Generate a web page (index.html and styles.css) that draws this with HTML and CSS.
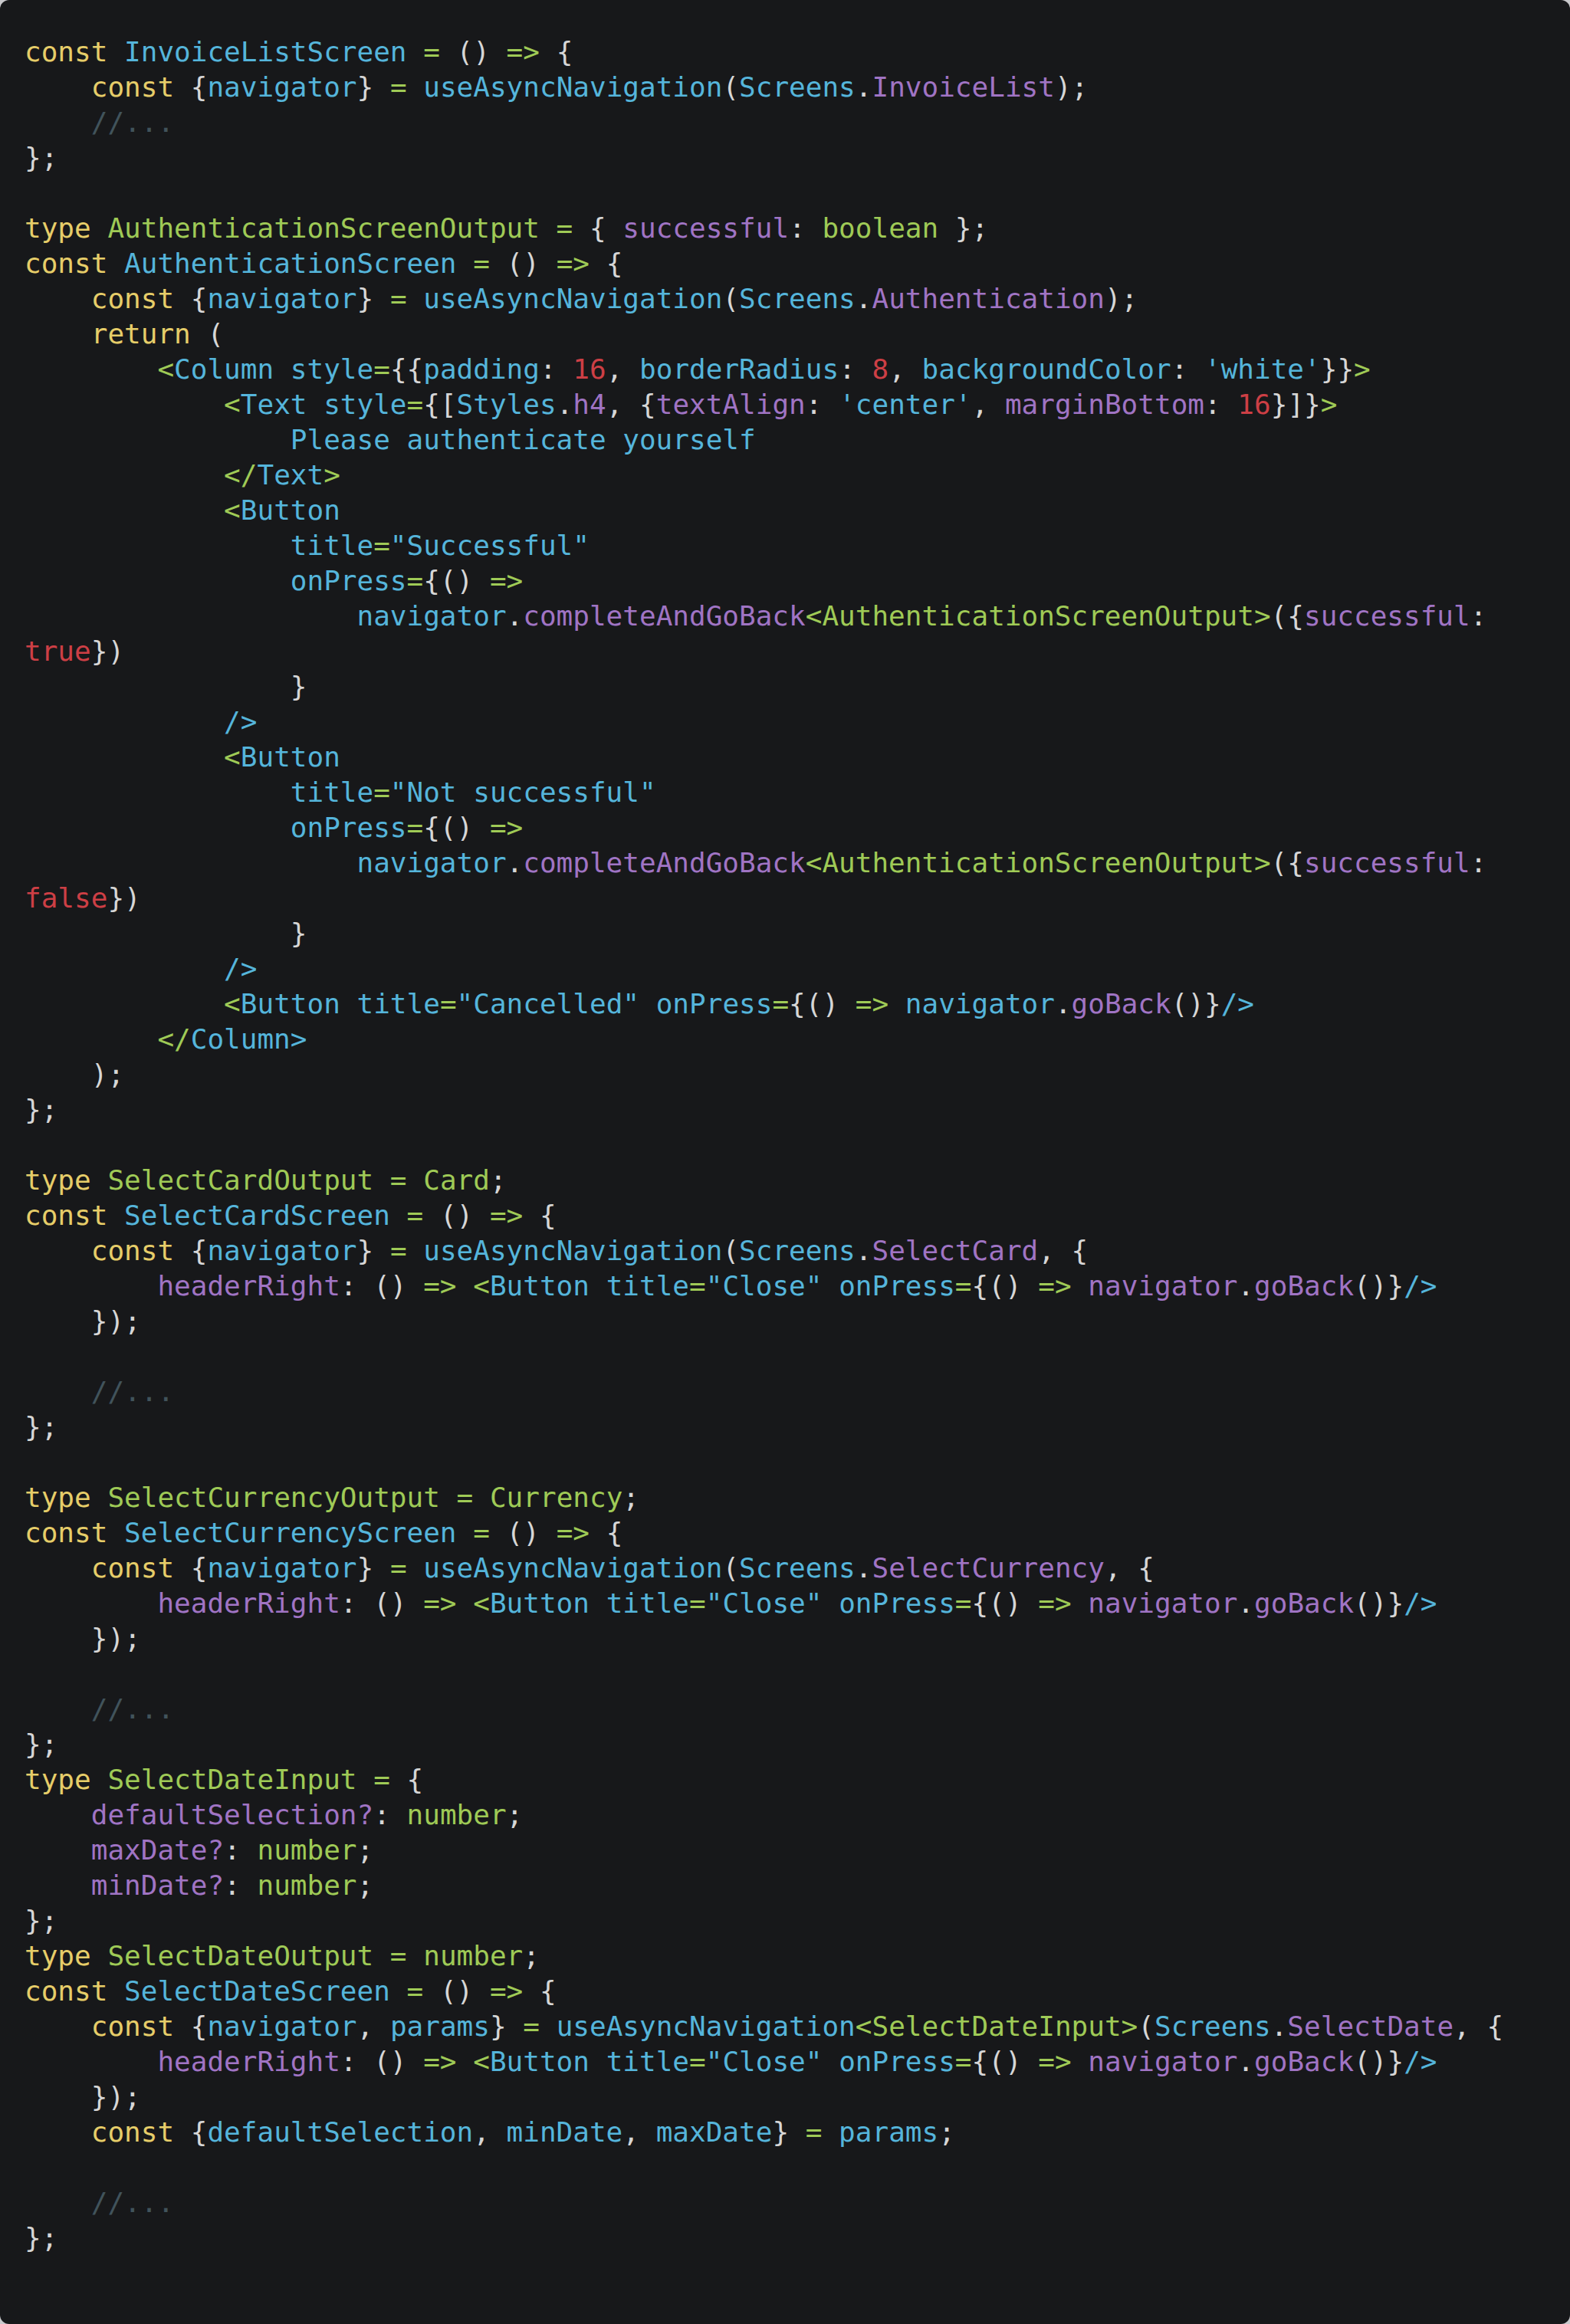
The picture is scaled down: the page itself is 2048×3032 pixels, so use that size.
FILE: index.html
```html
<!DOCTYPE html>
<html lang="en">
<head>
    <meta charset="UTF-8">
    <meta name="viewport" content="width=device-width, initial-scale=1.0">
    <title>Async Navigation - Screens</title>
    <link rel="stylesheet" href="styles.css">
</head>
<body>
    <div class="code-block">
<pre class="code"><span class="k">const</span> <span class="f">InvoiceListScreen</span> <span class="t">=</span> () <span class="t">=&gt;</span> {
    <span class="k">const</span> {<span class="f">navigator</span>} <span class="t">=</span> <span class="f">useAsyncNavigation</span>(<span class="f">Screens</span>.<span class="p">InvoiceList</span>);
    <span class="c">//...</span>
};

<span class="k">type</span> <span class="t">AuthenticationScreenOutput</span> <span class="t">=</span> { <span class="p">successful</span>: <span class="t">boolean</span> };
<span class="k">const</span> <span class="f">AuthenticationScreen</span> <span class="t">=</span> () <span class="t">=&gt;</span> {
    <span class="k">const</span> {<span class="f">navigator</span>} <span class="t">=</span> <span class="f">useAsyncNavigation</span>(<span class="f">Screens</span>.<span class="p">Authentication</span>);
    <span class="k">return</span> (
        <span class="t">&lt;</span><span class="f">Column</span> <span class="f">style</span><span class="t">=</span>{{<span class="f">padding</span>: <span class="n">16</span>, <span class="f">borderRadius</span>: <span class="n">8</span>, <span class="f">backgroundColor</span>: <span class="f">'white'</span>}}<span class="t">&gt;</span>
            <span class="t">&lt;</span><span class="f">Text</span> <span class="f">style</span><span class="t">=</span>{[<span class="f">Styles</span>.<span class="p">h4</span>, {<span class="p">textAlign</span>: <span class="f">'center'</span>, <span class="p">marginBottom</span>: <span class="n">16</span>}]}<span class="t">&gt;</span>
                <span class="f">Please authenticate yourself</span>
            <span class="t">&lt;/</span><span class="f">Text</span><span class="t">&gt;</span>
            <span class="t">&lt;</span><span class="f">Button</span>
                <span class="f">title</span><span class="t">=</span><span class="f">"Successful"</span>
                <span class="f">onPress</span><span class="t">=</span>{() <span class="t">=&gt;</span>
                    <span class="f">navigator</span>.<span class="p">completeAndGoBack</span><span class="t">&lt;AuthenticationScreenOutput&gt;</span>({<span class="p">successful</span>: <span class="n">true</span>})
                }
            <span class="f">/&gt;</span>
            <span class="t">&lt;</span><span class="f">Button</span>
                <span class="f">title</span><span class="t">=</span><span class="f">"Not successful"</span>
                <span class="f">onPress</span><span class="t">=</span>{() <span class="t">=&gt;</span>
                    <span class="f">navigator</span>.<span class="p">completeAndGoBack</span><span class="t">&lt;AuthenticationScreenOutput&gt;</span>({<span class="p">successful</span>: <span class="n">false</span>})
                }
            <span class="f">/&gt;</span>
            <span class="t">&lt;</span><span class="f">Button</span> <span class="f">title</span><span class="t">=</span><span class="f">"Cancelled"</span> <span class="f">onPress</span><span class="t">=</span>{() <span class="t">=&gt;</span> <span class="f">navigator</span>.<span class="p">goBack</span>()}<span class="f">/&gt;</span>
        <span class="t">&lt;/</span><span class="f">Column&gt;</span>
    );
};

<span class="k">type</span> <span class="t">SelectCardOutput</span> <span class="t">=</span> <span class="t">Card</span>;
<span class="k">const</span> <span class="f">SelectCardScreen</span> <span class="t">=</span> () <span class="t">=&gt;</span> {
    <span class="k">const</span> {<span class="f">navigator</span>} <span class="t">=</span> <span class="f">useAsyncNavigation</span>(<span class="f">Screens</span>.<span class="p">SelectCard</span>, {
        <span class="p">headerRight</span>: () <span class="t">=&gt;</span> <span class="t">&lt;</span><span class="f">Button</span> <span class="f">title</span><span class="t">=</span><span class="f">"Close"</span> <span class="f">onPress</span><span class="t">=</span>{() <span class="t">=&gt;</span> <span class="p">navigator</span>.<span class="p">goBack</span>()}<span class="f">/&gt;</span>
    });

    <span class="c">//...</span>
};

<span class="k">type</span> <span class="t">SelectCurrencyOutput</span> <span class="t">=</span> <span class="t">Currency</span>;
<span class="k">const</span> <span class="f">SelectCurrencyScreen</span> <span class="t">=</span> () <span class="t">=&gt;</span> {
    <span class="k">const</span> {<span class="f">navigator</span>} <span class="t">=</span> <span class="f">useAsyncNavigation</span>(<span class="f">Screens</span>.<span class="p">SelectCurrency</span>, {
        <span class="p">headerRight</span>: () <span class="t">=&gt;</span> <span class="t">&lt;</span><span class="f">Button</span> <span class="f">title</span><span class="t">=</span><span class="f">"Close"</span> <span class="f">onPress</span><span class="t">=</span>{() <span class="t">=&gt;</span> <span class="p">navigator</span>.<span class="p">goBack</span>()}<span class="f">/&gt;</span>
    });

    <span class="c">//...</span>
};
<span class="k">type</span> <span class="t">SelectDateInput</span> <span class="t">=</span> {
    <span class="p">defaultSelection?</span>: <span class="t">number</span>;
    <span class="p">maxDate?</span>: <span class="t">number</span>;
    <span class="p">minDate?</span>: <span class="t">number</span>;
};
<span class="k">type</span> <span class="t">SelectDateOutput</span> <span class="t">=</span> <span class="t">number</span>;
<span class="k">const</span> <span class="f">SelectDateScreen</span> <span class="t">=</span> () <span class="t">=&gt;</span> {
    <span class="k">const</span> {<span class="f">navigator</span>, <span class="f">params</span>} <span class="t">=</span> <span class="f">useAsyncNavigation</span><span class="t">&lt;SelectDateInput&gt;</span>(<span class="f">Screens</span>.<span class="p">SelectDate</span>, {
        <span class="p">headerRight</span>: () <span class="t">=&gt;</span> <span class="t">&lt;</span><span class="f">Button</span> <span class="f">title</span><span class="t">=</span><span class="f">"Close"</span> <span class="f">onPress</span><span class="t">=</span>{() <span class="t">=&gt;</span> <span class="p">navigator</span>.<span class="p">goBack</span>()}<span class="f">/&gt;</span>
    });
    <span class="k">const</span> {<span class="f">defaultSelection</span>, <span class="f">minDate</span>, <span class="f">maxDate</span>} <span class="t">=</span> <span class="f">params</span>;

    <span class="c">//...</span>
};</pre>
    </div>
</body>
</html>
```

FILE: styles.css
```css
* {
    margin: 0;
    padding: 0;
    box-sizing: border-box;
}
body {
    background-color: #c9c9cc;
}
.code-block {
    min-height: 100vh;
    background-color: #17181a;
    border-radius: 12px;
    padding: 45px 30px 40px 32px;
}
.code {
    font-family: 'DejaVu Sans Mono', monospace;
    font-size: 36px;
    line-height: 46px;
    color: #d6d6d6;
    white-space: pre-wrap;
}

/* Syntax colours */
.k {
    color: #e6cd69;
}
.f {
    color: #55b5db;
}
.t {
    color: #9fca56;
}
.p {
    color: #a074c4;
}
.n {
    color: #cd3f45;
}
.c {
    color: #41535b;
}
```
